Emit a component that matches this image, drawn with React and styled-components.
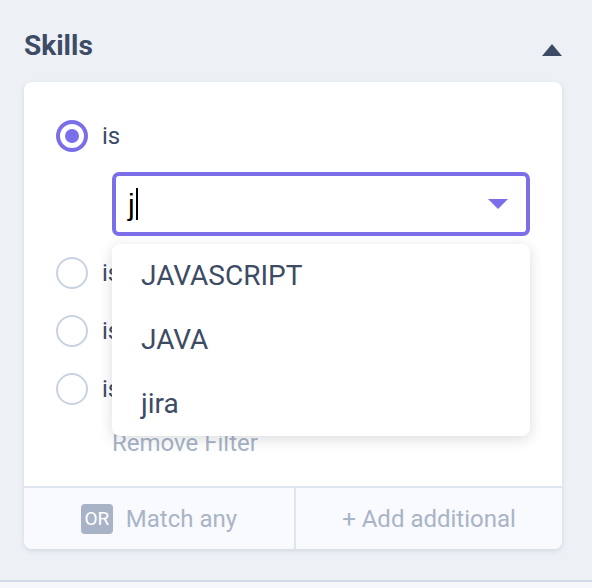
import React from 'react'
import styled, { createGlobalStyle } from 'styled-components'

const GlobalStyle = createGlobalStyle`
  html, body {
    margin: 0;
    padding: 0;
    background: #f5f7fa;
    font-family: Roboto, 'Liberation Sans', sans-serif;
  }
`

const Page = styled.div`
  background: #edf1f6;
  height: 582px;
  border-bottom: 2px solid #d2d9e6;
  padding: 30px 30px 0 24px;
  box-sizing: border-box;
`

const Header = styled.div`
  display: flex;
  justify-content: space-between;
  align-items: flex-start;
  height: 32px;
  margin-bottom: 20px;
`

const Title = styled.h2`
  margin: 0;
  font-size: 28px;
  line-height: 32px;
  font-weight: 700;
  color: #3d4b65;
`

const Caret = styled.span`
  width: 0;
  height: 0;
  margin-top: 14px;
  border-left: 10px solid transparent;
  border-right: 10px solid transparent;
  border-bottom: 12px solid #3d4b65;
`

const Card = styled.div`
  background: #fff;
  border-radius: 8px;
  box-shadow: 0 2px 5px rgba(40, 55, 85, 0.13);
`

const Body = styled.div`
  padding: 38px 32px 0 32px;
  height: 404px;
  box-sizing: border-box;
  display: flex;
  flex-direction: column;
`

const OptionRow = styled.div`
  display: flex;
  align-items: center;
  gap: 14px;
  height: 32px;
  flex-shrink: 0;
  margin-top: ${(p) => p.$top || 0}px;
  font-size: 24px;
  color: #3d4b65;
`

const Radio = styled.span`
  width: 32px;
  height: 32px;
  box-sizing: border-box;
  border-radius: 50%;
  flex-shrink: 0;
  border: ${(p) => (p.$checked ? '4px solid #7b6fe9' : '2px solid #c9d2e2')};
  display: flex;
  align-items: center;
  justify-content: center;
  &::after {
    content: '';
    width: 14px;
    height: 14px;
    border-radius: 50%;
    background: ${(p) => (p.$checked ? '#7b6fe9' : 'transparent')};
  }
`

const SelectWrap = styled.div`
  position: relative;
  margin: 20px 0 0 56px;
  z-index: 2;
  flex-shrink: 0;
`

const Input = styled.div`
  height: 64px;
  box-sizing: border-box;
  border: 4px solid #7b6fe9;
  border-radius: 7px;
  display: flex;
  align-items: center;
  padding: 0 18px 0 12px;
  background: #fff;
`

const Typed = styled.span`
  font-family: 'Liberation Sans', Arial, sans-serif;
  font-size: 30px;
  color: #000;
  line-height: 33px;
`

const TextCaret = styled.span`
  width: 2px;
  height: 32px;
  background: #000;
  margin-left: 1px;
`

const Arrow = styled.span`
  margin-left: auto;
  width: 0;
  height: 0;
  border-left: 10px solid transparent;
  border-right: 10px solid transparent;
  border-top: 10px solid #7b6fe9;
`

const Menu = styled.ul`
  position: absolute;
  left: 0;
  right: 0;
  top: calc(100% + 8px);
  margin: 0;
  padding: 0;
  list-style: none;
  background: #fff;
  border-radius: 8px;
  box-shadow: 0 3px 14px rgba(30, 40, 60, 0.16);
`

const MenuItem = styled.li`
  height: 64px;
  line-height: 64px;
  padding: 0 29px;
  font-size: 28px;
  color: #3d4b65;
`

const RemoveLink = styled.span`
  margin: 24px 0 0 56px;
  font-size: 24px;
  line-height: 28px;
  color: #a8b3c6;
`

const Footer = styled.div`
  display: grid;
  grid-template-columns: 270px 1fr;
  height: 63px;
  box-sizing: border-box;
  background: #f8fafd;
  border-top: 2px solid #dfe5ee;
  border-radius: 0 0 8px 8px;
`

const FooterCell = styled.div`
  display: flex;
  align-items: center;
  justify-content: center;
  gap: 13px;
  font-size: 24px;
  color: #a9b4c7;
  border-left: ${(p) => (p.$divided ? '2px solid #dfe5ee' : 'none')};
`

const Badge = styled.span`
  width: 32px;
  height: 30px;
  border-radius: 4px;
  background: #a8b3c7;
  color: #fff;
  font-size: 19px;
  display: flex;
  align-items: center;
  justify-content: center;
`

const options = ['is not', 'is filled', 'is empty']
const suggestions = ['JAVASCRIPT', 'JAVA', 'jira']

const App = () => {
  return (
    <Page>
      <GlobalStyle />
      <Header>
        <Title>Skills</Title>
        <Caret />
      </Header>
      <Card>
        <Body>
          <OptionRow>
            <Radio $checked />
            is
          </OptionRow>
          <SelectWrap>
            <Input>
              <Typed>j</Typed>
              <TextCaret />
              <Arrow />
            </Input>
            <Menu>
              {suggestions.map((s) => (
                <MenuItem key={s}>{s}</MenuItem>
              ))}
            </Menu>
          </SelectWrap>
          {options.map((o, i) => (
            <OptionRow key={o} $top={i === 0 ? 21 : 26}>
              <Radio />
              {o}
            </OptionRow>
          ))}
          <RemoveLink>Remove Filter</RemoveLink>
        </Body>
        <Footer>
          <FooterCell>
            <Badge>OR</Badge>
            Match any
          </FooterCell>
          <FooterCell $divided>+ Add additional</FooterCell>
        </Footer>
      </Card>
    </Page>
  )
}

export default App
